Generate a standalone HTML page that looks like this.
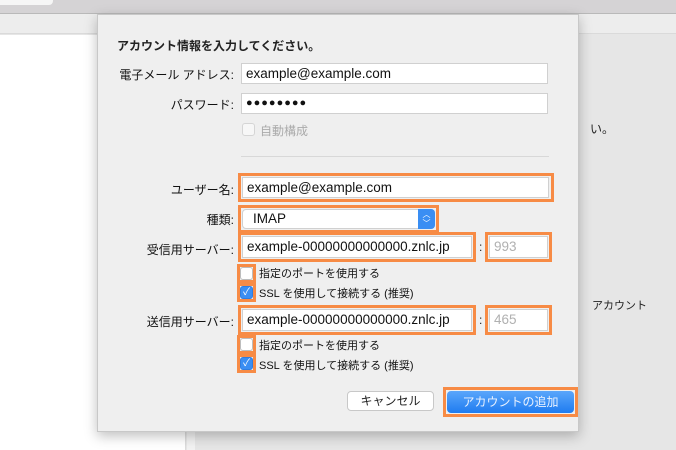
<!DOCTYPE html><html><head><meta charset="utf-8"><style>
*{margin:0;padding:0;box-sizing:border-box}
body{width:676px;height:450px;position:relative;overflow:hidden;background:#e6e6e6;font-family:"Liberation Sans","Noto Sans CJK JP",sans-serif;color:#222}
.a{position:absolute}
.lbl{position:absolute;font-size:12px;text-align:right;width:200px;color:#111}
.in{position:absolute;background:#fff;border:1px solid #d0d0d0;font-size:13.5px;padding-left:4px;line-height:19px;color:#111}
.ob{position:absolute;border:3px solid #f78b45}
.cb{position:absolute;width:13px;height:13px;border:1px solid #bdbdbd;border-radius:3px;background:#fff}
.cb.on{background:#3a8ef3;border-color:#2f7de0;color:#fff;font-size:10px;line-height:12px;text-align:center}
.ct{position:absolute;font-size:11px;color:#111}
</style></head><body>
<div class="a" style="left:0;top:0;width:676px;height:14px;background:#d5d3d5;border-bottom:1px solid #b9b9b9"></div>
<div class="a" style="left:0;top:0;width:53px;height:5px;background:#f6f6f6;border-radius:0 0 4px 0"></div>
<div class="a" style="left:0;top:14px;width:676px;height:20px;background:#ededed;border-bottom:1px solid #dadada"></div>
<div class="a" style="left:0;top:35px;width:186px;height:415px;background:#fff;border-right:1px solid #dcdcdc"></div>
<div class="a" style="left:187px;top:35px;width:8px;height:415px;background:#f2f2f2"></div>
<div class="a" style="left:590px;top:120px;font-size:12px">い。</div>
<div class="a" style="left:592px;top:297px;font-size:11px">アカウント</div>
<div class="a" style="left:97px;top:14px;width:482px;height:418px;background:#efefef;border:1px solid #c8c8c8;box-shadow:0 4px 12px rgba(0,0,0,.25)"></div>
<div class="a" style="left:117px;top:37px;font-size:12px;font-weight:bold">アカウント情報を入力してください。</div>
<div class="lbl" style="left:34px;top:66px">電子メール アドレス:</div>
<div class="in" style="left:241px;top:63px;width:307px;height:21px">example@example.com</div>
<div class="lbl" style="left:34px;top:96px">パスワード:</div>
<div class="in" style="left:241px;top:93px;width:307px;height:21px;font-size:11px;letter-spacing:1px">●●●●●●●●</div>
<div class="cb" style="left:242px;top:123px;opacity:.5"></div>
<div class="ct" style="left:260px;top:122px;color:#aaa;font-size:12px">自動構成</div>
<div class="a" style="left:241px;top:156px;width:308px;height:1px;background:#d8d8d8"></div>
<div class="lbl" style="left:34px;top:181px">ユーザー名:</div>
<div class="ob" style="left:238px;top:173px;width:316px;height:29px"></div>
<div class="in" style="left:242px;top:177px;width:307px;height:21px">example@example.com</div>
<div class="lbl" style="left:34px;top:211px">種類:</div>
<div class="ob" style="left:238px;top:205px;width:201px;height:28px"></div>
<div class="in" style="left:242px;top:209px;width:193px;height:20px;border-radius:4px;padding-left:10px;line-height:18px">IMAP</div>
<div class="a" style="left:418px;top:209px;width:17px;height:20px;background:#3a8ef3;border-radius:0 4px 4px 0;color:#fff;font-size:8px;line-height:9px;text-align:center;padding-top:1px">︿<br>﹀</div>
<div class="lbl" style="left:34px;top:241px">受信用サーバー:</div>
<div class="ob" style="left:238px;top:232px;width:238px;height:30px"></div>
<div class="in" style="left:242px;top:236px;width:230px;height:22px;line-height:20px">example-00000000000000.znlc.jp</div>
<div class="a" style="left:479px;top:240px;font-size:12px">:</div>
<div class="ob" style="left:485px;top:232px;width:67px;height:30px"></div>
<div class="in" style="left:489px;top:236px;width:59px;height:22px;color:#b0b0b0;line-height:20px">993</div>
<div class="ob" style="left:237px;top:264px;width:19px;height:19px"></div>
<div class="cb" style="left:240px;top:267px"></div>
<div class="ct" style="left:259px;top:265px">指定のポートを使用する</div>
<div class="ob" style="left:237px;top:283px;width:19px;height:19px"></div>
<div class="cb on" style="left:240px;top:286px">✓</div>
<div class="ct" style="left:259px;top:285px">SSL を使用して接続する (推奨)</div>
<div class="lbl" style="left:34px;top:313px">送信用サーバー:</div>
<div class="ob" style="left:238px;top:305px;width:238px;height:30px"></div>
<div class="in" style="left:242px;top:309px;width:230px;height:22px;line-height:20px">example-00000000000000.znlc.jp</div>
<div class="a" style="left:479px;top:313px;font-size:12px">:</div>
<div class="ob" style="left:485px;top:305px;width:67px;height:30px"></div>
<div class="in" style="left:489px;top:309px;width:59px;height:22px;color:#b0b0b0;line-height:20px">465</div>
<div class="ob" style="left:237px;top:335px;width:19px;height:19px"></div>
<div class="cb" style="left:240px;top:338px"></div>
<div class="ct" style="left:259px;top:337px">指定のポートを使用する</div>
<div class="ob" style="left:237px;top:354px;width:19px;height:19px"></div>
<div class="cb on" style="left:240px;top:357px">✓</div>
<div class="ct" style="left:259px;top:357px">SSL を使用して接続する (推奨)</div>
<div class="a" style="left:347px;top:391px;width:87px;height:20px;background:#fff;border:1px solid #c8c8c8;border-radius:4px;font-size:12px;text-align:center;line-height:18px">キャンセル</div>
<div class="ob" style="left:443px;top:387px;width:135px;height:30px"></div>
<div class="a" style="left:447px;top:391px;width:127px;height:22px;background:linear-gradient(#5aa6fb,#1f7cf0);border-radius:4px;font-size:12px;text-align:center;line-height:22px;color:#eaf2ff">アカウントの追加</div>
</body></html>
